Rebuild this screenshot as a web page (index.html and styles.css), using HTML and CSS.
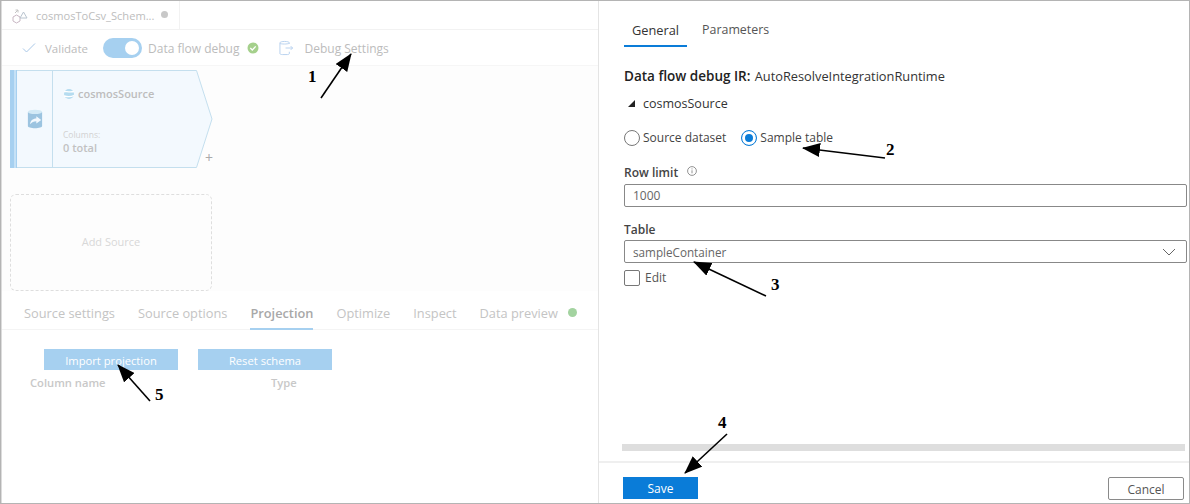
FILE: index.html
```html
<!DOCTYPE html>
<html lang="en">
<head>
    <meta charset="UTF-8">
    <title>Debug Settings</title>
    <link rel="stylesheet" href="styles.css">
</head>
<body>
<div class="frame">

    <!-- left: data flow editor, dimmed -->
    <div class="editor">
        <div class="tab-strip">
            <div class="file-tab">
                <svg class="file-icon" width="16" height="16" viewBox="0 0 16 16" fill="none" stroke-width="1">
                    <path d="M4.500 7l3.500 2v4l-3.500 2L1 13V9z" stroke="#c9b8c4"/>
                    <path d="M11.500 4l3.500 6H8z" stroke="#b9c4cf"/>
                    <path d="M3 5l3-3M6 2H3.500M6 2v2.500" stroke="#c4c4c4"/>
                </svg>
                <span class="file-name">cosmosToCsv_Schem...</span>
                <span class="dirty-dot"></span>
            </div>
        </div>
        <div class="toolbar">
            <svg class="check-icon" width="14" height="12" viewBox="0 0 14 12" fill="none" stroke="#a9c8e8" stroke-width="1">
                <path d="M1 6.500l3.500 3.500L13 1.500"/>
            </svg>
            <span class="tool-label validate">Validate</span>
            <span class="toggle"><span class="toggle-knob"></span></span>
            <span class="tool-label">Data flow debug</span>
            <svg class="ok-icon" width="12" height="12" viewBox="0 0 12 12">
                <circle cx="6" cy="6" r="5.500" fill="#a5d08c"/>
                <path d="M3.300 6l2 2 3.400-3.600" fill="none" stroke="#fff" stroke-width="1.300"/>
            </svg>
            <svg class="debug-icon" width="15" height="16" viewBox="0 0 16 16" fill="none" stroke="#b5d0ee" stroke-width="1">
                <path d="M11 3.500V2.500C11 1.500 8.500 1 6 1S1 1.500 1 2.500V14c0 .6 1 1 2.500 1H9c1.200 0 2-.4 2-1v-2"/>
                <path d="M1 3c1 1 8 1 10 0M7 8h7.500M12.500 6l2 2-2 2"/>
            </svg>
            <span class="tool-label">Debug Settings</span>
        </div>

        <div class="canvas">
            <div class="node">
                <svg class="node-shape" width="203" height="98" viewBox="0 0 203 98">
                    <path d="M.5.500H186.500L202 49 186.500 97.500H.5z" fill="#f3f9fe" stroke="#c4dfee"/>
                    <rect x="0" y="0" width="7" height="98" fill="#a6d0f0"/>
                    <rect x="4.500" y="0" width="1" height="98" fill="#e4f2fb"/>
                    <path d="M42.500 0v98" stroke="#c4dfee"/>
                </svg>
                <div class="node-side">
                    <svg width="16" height="20" viewBox="0 0 18 22">
                        <path d="M1 3v16c0 1.500 3.500 2.500 8 2.500s8-1 8-2.500V3z" fill="#9cc4e0"/>
                        <ellipse cx="9" cy="3" rx="8" ry="2.500" fill="#d3eaf6"/>
                        <path d="M3.500 17c0-4 3-6.500 7-6.500V8L16 12l-5.500 4v-2.500c-3 0-5 1-7 3.500z" fill="#f3f9fe"/>
                    </svg>
                </div>
                <div class="node-body">
                    <div class="node-title">
                        <svg width="12" height="12" viewBox="0 0 12 12">
                            <circle cx="6" cy="6" r="5" fill="#b5dcf0"/>
                            <path d="M1 3.500c3 0 6 1 10 0M1 8c4 1 7 1 10-.5" fill="none" stroke="#fff" stroke-width="1.300"/>
                        </svg>
                        <span>cosmosSource</span>
                    </div>
                    <div class="node-columns">Columns:</div>
                    <div class="node-total">0 total</div>
                </div>
                <span class="node-plus">+</span>
            </div>
            <div class="add-source">Add Source</div>
        </div>

        <div class="sub-tabs">
            <span class="sub-tab">Source settings</span>
            <span class="sub-tab">Source options</span>
            <span class="sub-tab active">Projection</span>
            <span class="sub-tab">Optimize</span>
            <span class="sub-tab">Inspect</span>
            <span class="sub-tab">Data preview</span>
            <span class="preview-dot"></span>
        </div>
        <div class="projection">
            <div class="projection-btns">
                <span class="pale-btn">Import projection</span>
                <span class="pale-btn">Reset schema</span>
            </div>
            <div class="projection-head">
                <span class="col-name">Column name</span>
                <span>Type</span>
            </div>
        </div>
    </div>

    <!-- right: debug settings panel -->
    <div class="panel">
        <div class="panel-tabs">
            <span class="panel-tab active">General</span>
            <span class="panel-tab">Parameters</span>
        </div>
        <div class="panel-body">
            <p class="ir-line"><strong>Data flow debug IR:</strong> AutoResolveIntegrationRuntime</p>
            <p class="source-line"><span class="caret"></span>cosmosSource</p>
            <div class="radios">
                <span class="radio"></span><span class="radio-label first">Source dataset</span>
                <span class="radio checked"></span><span class="radio-label">Sample table</span>
            </div>
            <div class="field-label row-limit">
                Row limit
                <svg width="10" height="10" viewBox="0 0 10 10" fill="none" stroke="#777" stroke-width=".8">
                    <circle cx="5" cy="5" r="4.400"/>
                    <path d="M5 4.300v3M5 2.400v1"/>
                </svg>
            </div>
            <div class="text-box">1000</div>
            <div class="field-label table-label">Table</div>
            <div class="text-box select-box">
                sampleContainer
                <svg width="14" height="8" viewBox="0 0 14 8" fill="none" stroke="#666" stroke-width="1">
                    <path d="M1 1l6 6 6-6"/>
                </svg>
            </div>
            <div class="edit-row"><span class="check-box"></span>Edit</div>
        </div>
        <div class="scroll-track"></div>
        <div class="panel-foot">
            <span class="save-btn">Save</span>
            <span class="cancel-btn">Cancel</span>
        </div>
    </div>

    <!-- numbered arrows drawn over the screenshot -->
    <svg class="notes" width="1190" height="504" viewBox="0 0 1190 504">
        <defs>
            <marker id="head" markerWidth="18" markerHeight="14" refX="17" refY="7" orient="auto" markerUnits="userSpaceOnUse">
                <path d="M0 0L18 7 0 14z" fill="#000"/>
            </marker>
        </defs>
        <g stroke="#000" stroke-width="1.600" marker-end="url(#head)">
            <path d="M321 98L351 54"/>
            <path d="M885 158L803 148"/>
            <path d="M766 296L694 262"/>
            <path d="M727 434L685 473"/>
            <path d="M150 401L118 365"/>
        </g>
        <g class="note-nums">
            <text x="308" y="82">1</text>
            <text x="886" y="155">2</text>
            <text x="771" y="290">3</text>
            <text x="718" y="428">4</text>
            <text x="155" y="400">5</text>
        </g>
    </svg>
</div>
</body>
</html>
```

FILE: styles.css
```css
* {
    margin: 0;
    padding: 0;
    box-sizing: border-box;
}

body {
    width: 1190px;
    height: 504px;
    overflow: hidden;
    background: #fff;
    font-family: "Open Sans", "Noto Sans", sans-serif;
    font-size: 12px;
    color: #444;
}

.frame {
    position: relative;
    display: flex;
    width: 1190px;
    height: 504px;
    border: 1px solid #b4b4b4;
}

/* Left side */
.editor {
    width: 597px;
    display: flex;
    flex-direction: column;
    color: #b5b5b5;
    border-left: 1px solid #dcdcdc;
}

.tab-strip {
    height: 29px;
    border-bottom: 1px solid #f2f2f2;
}

.file-tab {
    width: 178px;
    height: 29px;
    display: flex;
    align-items: center;
    padding-left: 10px;
    border-right: 1px solid #f2f2f2;
}

.file-name {
    margin-left: 8px;
    font-size: 11.100px;
    color: #bdbdbd;
    white-space: nowrap;
}

.dirty-dot {
    width: 7px;
    height: 7px;
    margin-left: 7px;
    margin-bottom: 2px;
    border-radius: 50%;
    background: #c8c8c8;
}

.toolbar {
    height: 36px;
    display: flex;
    align-items: center;
    padding: 1px 0 0 20px;
    border-bottom: 1px solid #f6f6f6;
}

.tool-label {
    font-size: 12px;
    color: #bcbcbc;
    white-space: nowrap;
}

.validate {
    margin: 0 15px 0 9px;
    font-size: 11.500px;
}

.toggle {
    width: 39px;
    height: 20px;
    margin-right: 6px;
    padding: 3px;
    display: flex;
    justify-content: flex-end;
    border-radius: 10px;
    background: #a6d0f0;
}

.toggle-knob {
    width: 14px;
    height: 14px;
    border-radius: 50%;
    background: #fff;
}

.ok-icon {
    margin: 0 20px 0 8px;
}

.debug-icon {
    margin-right: 10px;
}

.canvas {
    height: 225px;
    padding: 4px 0 0 8px;
    background: #fdfdfd;
}

.node {
    position: relative;
    display: flex;
    width: 203px;
    height: 98px;
}

.node-shape {
    position: absolute;
    left: 0;
    top: 0;
}

.node-side {
    position: relative;
    width: 43px;
    padding: 39px 0 0 17px;
}

.node-body {
    position: relative;
    padding: 16px 0 0 10px;
}

.node-title {
    display: flex;
    align-items: center;
    gap: 3px;
    font-size: 11px;
    font-weight: 600;
    color: #bdbdbd;
}

.node-columns {
    margin-top: 28px;
    font-size: 8.500px;
    color: #d2d2d2;
}

.node-total {
    font-size: 11px;
    font-weight: 600;
    color: #c2c2c2;
}

.node-plus {
    position: absolute;
    left: 195px;
    top: 78px;
    font-size: 14px;
    color: #aaa;
}

.add-source {
    width: 202px;
    height: 97px;
    margin-top: 26px;
    padding-bottom: 2px;
    display: flex;
    align-items: center;
    justify-content: center;
    border: 1px dashed #dedede;
    border-radius: 6px;
    font-size: 11px;
    color: #d8d8d8;
}

.sub-tabs {
    height: 39px;
    display: flex;
    align-items: center;
    padding-left: 22px;
    border-bottom: 1px solid #f4f4f4;
}

.sub-tab {
    height: 39px;
    line-height: 45px;
    margin-right: 23px;
    font-size: 12.800px;
    color: #c4c4c4;
    white-space: nowrap;
}

.sub-tab.active {
    color: #a8a8a8;
    font-weight: 600;
    border-bottom: 2px solid #a6d0f0;
}

.preview-dot {
    width: 9px;
    height: 9px;
    margin: 4px 0 0 -13px;
    border-radius: 50%;
    background: #a3d3a0;
}

.projection {
    padding: 19px 0 0 42px;
}

.projection-btns {
    display: flex;
    gap: 20px;
}

.pale-btn {
    width: 134px;
    height: 21px;
    line-height: 23px;
    text-align: center;
    font-size: 11.200px;
    color: #fff;
    background: #a6d0f0;
}

.projection-head {
    display: flex;
    margin: 5px 0 0 -14px;
    font-size: 11.200px;
    font-weight: 600;
    color: #c8c8c8;
}

.col-name {
    width: 241px;
}

/* Right side */
.panel {
    flex: 1;
    display: flex;
    flex-direction: column;
    border-left: 1px solid #e4e4e4;
}

.panel-tabs {
    display: flex;
    padding: 20px 0 0 25px;
}

.panel-tab {
    height: 26px;
    padding: 0 8px;
    margin-right: 7px;
    font-size: 12.400px;
    color: #555;
}

.panel-tab.active {
    font-size: 12.800px;
    color: #333;
    border-bottom: 2px solid #0a7cd8;
}

.panel-body {
    flex: 1;
    padding: 0 0 0 25px;
}

.ir-line {
    margin-top: 20px;
    font-size: 12.800px;
    color: #333;
}

.ir-line strong {
    margin-right: 1px;
    font-size: 13.500px;
    font-weight: 600;
    color: #222;
}

.source-line {
    display: flex;
    align-items: center;
    margin-top: 10px;
    padding-left: 4px;
    font-size: 12.500px;
    color: #333;
}

.caret {
    width: 0;
    height: 0;
    margin-right: 8px;
    border-left: 7px solid transparent;
    border-bottom: 7px solid #222;
}

.radios {
    display: flex;
    align-items: center;
    margin-top: 17px;
    font-size: 12px;
    color: #444;
}

.radio {
    width: 16px;
    height: 16px;
    margin-right: 3px;
    border: 1px solid #777;
    border-radius: 50%;
    background: #fff;
}

.radio.checked {
    border: 1px solid #0a7cd8;
    box-shadow: inset 0 0 0 3px #fff, inset 0 0 0 8px #0a7cd8;
}

.radio-label.first {
    margin-right: 15px;
}

.field-label {
    font-size: 12px;
    font-weight: 600;
    color: #444;
}

.row-limit {
    display: flex;
    align-items: center;
    gap: 9px;
    margin-top: 17px;
    height: 18px;
}

.row-limit svg {
    margin-bottom: 3px;
}

.text-box {
    display: flex;
    align-items: center;
    justify-content: space-between;
    width: 563px;
    height: 23px;
    margin-top: 3px;
    padding: 0 10px 0 8px;
    border: 1px solid #888;
    border-radius: 2px;
    font-size: 12px;
    color: #666;
}

.table-label {
    margin-top: 14px;
}

.select-box {
    margin-top: 2px;
    font-size: 11.700px;
}

.edit-row {
    display: flex;
    align-items: center;
    gap: 5px;
    margin-top: 6px;
    font-size: 12px;
    color: #555;
}

.check-box {
    width: 16px;
    height: 16px;
    border: 1px solid #777;
    border-radius: 2px;
}

.scroll-track {
    width: 563px;
    height: 7px;
    margin: 0 0 10px 23px;
    background: #dedede;
}

.panel-foot {
    height: 42px;
    display: flex;
    align-items: flex-start;
    justify-content: space-between;
    padding: 14px 5px 0 24px;
    border-top: 2px solid #efefef;
}

.save-btn {
    width: 75px;
    height: 22px;
    line-height: 24px;
    text-align: center;
    font-size: 12px;
    color: #fff;
    background: #0a7cd8;
}

.cancel-btn {
    width: 76px;
    height: 23px;
    line-height: 23px;
    text-align: center;
    font-size: 12px;
    color: #555;
    border: 1px solid #8a8a8a;
    border-radius: 2px;
}

/* Annotations */
.notes {
    position: absolute;
    left: -1px;
    top: -1px;
}

.note-nums text {
    font-family: "Liberation Serif", serif;
    font-size: 17px;
    font-weight: 700;
    fill: #000;
}
```
